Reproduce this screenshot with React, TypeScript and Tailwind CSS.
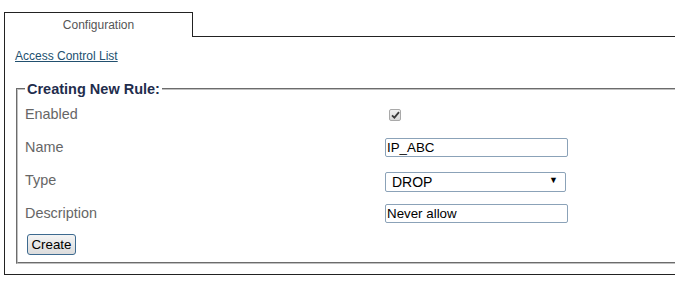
import React from "react";

const font = "font-['Liberation_Sans',Arial,sans-serif]";

function Row({ label, children }: { label: string; children: React.ReactNode }) {
  return (
    <div className="grid h-[33px] grid-cols-[360px_auto] items-center">
      <span className="text-[14.4px] leading-[17px] text-[#666]">{label}</span>
      <div className="flex items-center">{children}</div>
    </div>
  );
}

function CheckBox() {
  return (
    <span className="ml-[4px] mt-[1px] flex h-[12px] w-[12px] items-center justify-center rounded-[2px] border border-[#a9a9a9] bg-gradient-to-b from-[#f0f0f0] to-[#d8d8d8]">
      <svg width="9" height="8" viewBox="0 0 9 8">
        <path d="M1 4.3 L3.4 6.6 L8 1.2" fill="none" stroke="#3a3a3a" strokeWidth="1.8" />
      </svg>
    </span>
  );
}

export default function App() {
  return (
    <div className={`h-[290px] w-[675px] overflow-hidden bg-white pl-[4px] pt-[12px] ${font}`}>
      <div className="flex w-[800px]">
        <div className="flex h-[25px] w-[189px] items-center justify-center border-x border-t border-[#222] text-[12px] text-[#555]">
          Configuration
        </div>
        <div className="flex-1 border-b border-[#222]" />
      </div>

      <div className="w-[800px] border-b border-l border-[#222] pb-[10px] pl-[10px] pt-[12px]">
        <a href="#" className="block text-[12px] leading-[14px] text-[#22506f] underline">
          Access Control List
        </a>

        <fieldset className="ml-[1px] mt-[17px] w-[760px] border-2 border-[#c0c0c0] pb-[6px] pl-[7px] [border-style:groove]">
          <legend className="px-[2px] text-[14.5px] font-bold leading-[18px] text-[#1f2d4d]">
            Creating New Rule:
          </legend>

          <Row label="Enabled">
            <CheckBox />
          </Row>
          <Row label="Name">
            <input
              defaultValue="IP_ABC"
              className="h-[19px] w-[183px] rounded-[2px] border border-[#8ba2b8] px-[1px] text-[13.33px] text-black outline-none"
            />
          </Row>
          <Row label="Type">
            <div className="relative mt-[2px]">
              <select
                defaultValue="DROP"
                className="h-[20px] w-[181px] appearance-none rounded-[2px] border border-[#8ba2b8] pl-[6px] text-[14px] leading-[18px] text-black outline-none"
              >
                <option>DROP</option>
                <option>ACCEPT</option>
              </select>
              <span className="pointer-events-none absolute right-[8px] top-[4px] text-[9px] leading-[12px] text-black">
                ▼
              </span>
            </div>
          </Row>
          <Row label="Description">
            <input
              defaultValue="Never allow"
              className="h-[19px] w-[183px] rounded-[2px] border border-[#8ba2b8] px-[1px] text-[13.33px] text-black outline-none"
            />
          </Row>

          <button className="ml-[2px] mt-[4px] h-[21px] w-[49px] rounded-[3px] border border-[#3d6a8f] bg-gradient-to-b from-[#f4f4f4] to-[#dcdcdc] text-[13.33px] leading-[17px] text-black">
            Create
          </button>
        </fieldset>
      </div>
    </div>
  );
}
